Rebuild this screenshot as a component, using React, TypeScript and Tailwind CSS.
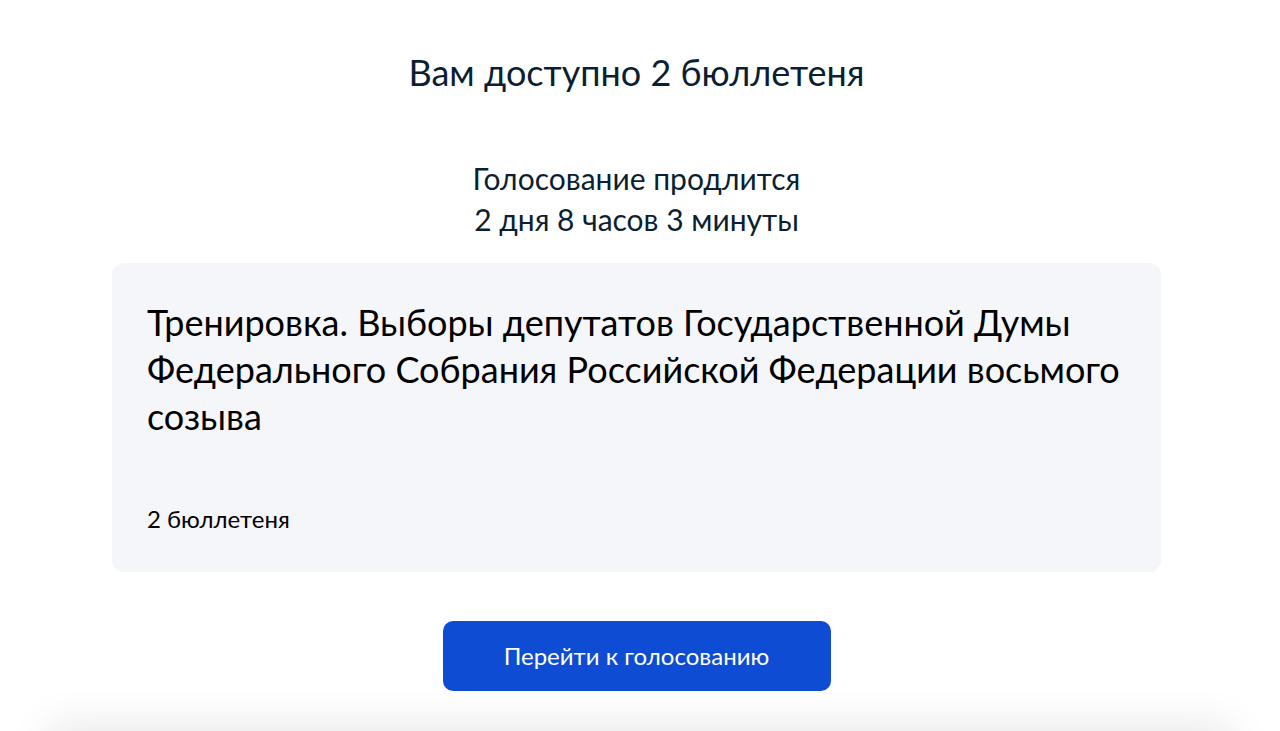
import React from 'react';

export default function App() {
  return (
    <div className="relative w-full h-[731px] overflow-hidden bg-white font-['Lato','Noto_Sans',sans-serif] text-[#0b1f33]">
      <div className="flex flex-col items-center pr-[7px]">
        <h1 className="mt-[50px] text-[36px] leading-[44px] font-normal">Вам доступно 2 бюллетеня</h1>

        <p className="mt-[64px] text-[30px] leading-[41px] text-center">
          Голосование продлится
          <br />
          2 дня 8 часов 3 минуты
        </p>

        <div className="mt-[23px] w-[1049px] h-[309px] rounded-xl bg-[#f5f6fa] px-[35px] pt-[36px] flex flex-col">
          <h2 className="text-[36px] leading-[47px] text-black font-normal">
            Тренировка. Выборы депутатов Государственной Думы Федерального Собрания Российской Федерации восьмого созыва
          </h2>
          <div className="mt-[64px] text-[24px] leading-[30px] text-black">2 бюллетеня</div>
        </div>

        <button className="mt-[49px] w-[388px] h-[70px] rounded-[10px] bg-[#0d4cd3] text-white text-[24px]">
          Перейти к голосованию
        </button>
      </div>

      <div className="absolute left-[60px] right-[60px] top-[740px] h-[60px] bg-white shadow-[0_-4px_40px_12px_rgba(0,0,0,0.09)]" />
    </div>
  );
}
